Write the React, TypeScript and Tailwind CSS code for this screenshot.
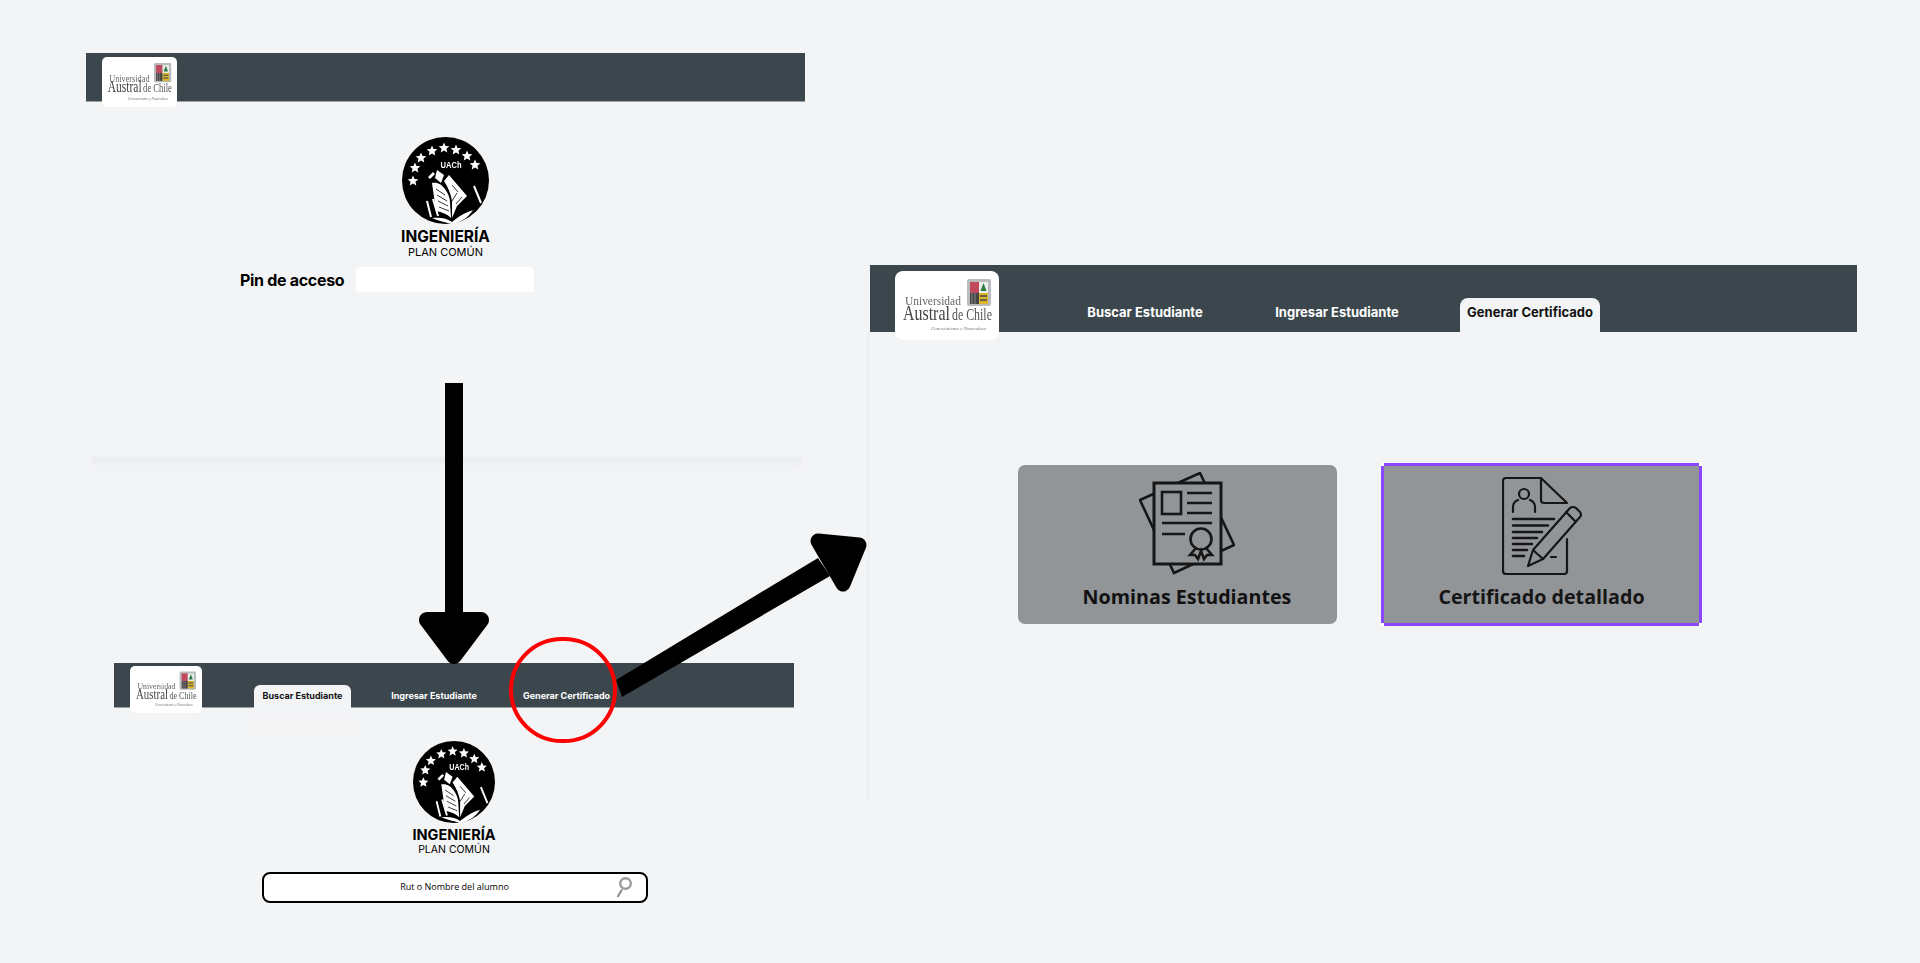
import React from "react";

const Star = ({ x, y, r = 5.6 }: { x: number; y: number; r?: number }) => {
  const pts: string[] = [];
  for (let i = 0; i < 10; i++) {
    const rad = i % 2 === 0 ? r : r * 0.46;
    const a = (Math.PI / 5) * i - Math.PI / 2;
    pts.push(`${x + rad * Math.cos(a)},${y + rad * Math.sin(a)}`);
  }
  return <polygon points={pts.join(" ")} fill="#fff" />;
};

const stars = [
  [11, 44],
  [13, 31],
  [19, 21],
  [30, 14],
  [42, 11],
  [54, 13],
  [65, 19],
  [73, 28],
];

// round black faculty badge
const UachBadge = ({ className }: { className: string }) => (
  <svg viewBox="0 0 87 87" className={className}>
    <circle cx="43.5" cy="43.5" r="43.5" fill="#000" />
    {stars.map(([x, y]) => (
      <Star key={`${x}-${y}`} x={x} y={y} />
    ))}
    <text x="49" y="31" fontSize="9" fontWeight="700" fill="#fff" textAnchor="middle" textLength="21" lengthAdjust="spacingAndGlyphs" fontFamily="'Liberation Sans', sans-serif">
      UACh
    </text>
    <path d="M26 40l5-5 2 2-5 5zM35 33l7 5-3 8-6-5z" fill="#fff" />
    <path d="M30 46c6-1 10 2 13 6 3 4 5 9 5 13l1 16c-4-4-9-6-15-7z" fill="#fff" />
    <path d="M42 44l5-6 18 21-10 10-5 12v-17c-1-7-4-14-8-20z" fill="#fff" />
    <path d="M34 52l9 6M35 58l10 6M36 64l10 5M37 70l10 4M50 48l6 7M55 56l-5 8M60 60l-6 7" stroke="#000" strokeWidth="0.8" fill="none" />
    <path d="M25 64l4 16M31 62l5 17M72 49l7 17" stroke="#fff" strokeWidth="2" fill="none" />
    <path d="M30 81c8-1 15 0 20 4 6-5 12-9 21-12-5 8-12 12-21 14-7-2-13-3-20-6z" fill="#fff" />
  </svg>
);

// university logo on its white tile
const UniLogo = ({ className }: { className: string }) => (
  <div className={`bg-white shrink-0 ${className}`}>
    <svg viewBox="0 0 104 69" className="w-full h-full blur-[0.5px]">
      <rect x="72" y="8" width="24" height="27" rx="2" fill="#b9bbbd" />
      <rect x="75" y="11" width="9" height="11" fill="#c04a5c" />
      <rect x="84" y="11" width="9" height="11" fill="#e8eee8" />
      <path d="M88.500 12l3 8h-6z" fill="#2d7a45" />
      <rect x="75" y="22" width="9" height="11" fill="#444" />
      <rect x="84" y="22" width="9" height="11" fill="#d9b530" />
      <path d="M85 25h7M85 29h7" stroke="#444" strokeWidth="1.400" />
      <path d="M77 22v11M80 22v11" stroke="#999" strokeWidth="0.8" />
      <g fontFamily="'Liberation Serif', serif">
        <text transform="translate(10 34) scale(0.88 1)" fontSize="13" fill="#666">
          Universidad
        </text>
        <text transform="translate(8 49) scale(0.725 1)" fontSize="22" fill="#444">
          Austral
        </text>
        <text transform="translate(57 49) scale(0.743 1)" fontSize="16" fill="#555">
          de Chile
        </text>
        <text x="36" y="59" fontSize="5" fontStyle="italic" fill="#777">
          Conocimiento y Naturaleza
        </text>
      </g>
    </svg>
  </div>
);

const DiplomaIcon = () => (
  <svg viewBox="0 0 96 103" className="w-[96px] h-[103px] blur-[0.4px]" fill="none" stroke="#161616" strokeWidth="2.600">
    <polygon points="1,28 61,1 95,73 35,101" />
    <rect x="15" y="11" width="67" height="81" fill="#929598" strokeWidth="3" />
    <rect x="23" y="20" width="19" height="22" />
    <path d="M48 21h25M48 31h25M48 41h25M23 51h50M23 62h23" />
    <circle cx="62" cy="67" r="10.500" />
    <path d="M57 76l-6 7h5l3 4 3-8 3 8 3-4h5l-6-7" />
  </svg>
);

const CertificateIcon = () => (
  <svg viewBox="0 0 80 98" className="w-[80px] h-[98px] blur-[0.4px]" fill="none" stroke="#161616" strokeWidth="2.200" strokeLinecap="round" strokeLinejoin="round">
    <path d="M65 62v32q0 3-3 3H4q-3 0-3-3V4q0-3 3-3h35l26 25H42q-3 0-3-3V1" />
    <circle cx="22" cy="17" r="5" />
    <path d="M11 35v-5q0-5 5-7M33 35v-5q0-5-5-7" />
    <path d="M11 42h41M11 48.500h35M11 55h29M11 61h24M11 67h19M11 73h14M11 79h11" strokeWidth="2.600" />
    <path d="M26 89l5-16 37-42q3-2 6 0l4 4q2 3 0 5L41 82z" />
    <path d="M31 73l10 9M64 35l9 9M49 80h5" />
  </svg>
);

const SmallTab = ({ label, active, width }: { label: string; active?: boolean; width: string }) => (
  <div className={`h-[23px] pb-[1px] flex items-center justify-center rounded-t-[6px] text-[9px] font-bold whitespace-nowrap ${width} ${active ? "bg-[#f3f4f6] text-[#111]" : "text-white"}`}>
    {label}
  </div>
);

const BigTab = ({ label, active, width }: { label: string; active?: boolean; width: string }) => (
  <div className={`h-[34px] pb-[4px] flex items-center justify-center rounded-t-[8px] text-[13px] font-bold whitespace-nowrap ${width} ${active ? "bg-[#f3f4f6] text-[#111]" : "text-white"}`}>
    {label}
  </div>
);

export default function App() {
  return (
    <div className="relative w-full h-[963px] overflow-hidden bg-[#f3f4f6] font-['Inter','Liberation_Sans',sans-serif]">
      {/* faint shadow of the frame between the two steps */}
      <div className="absolute left-[92px] top-[457px] w-[710px] h-[10px] bg-gradient-to-b from-[#e6e8ea] to-[#f3f4f6] blur-[1.5px]" />
      <div className="absolute left-[254px] top-[720px] w-[98px] h-[13px] bg-[#f5f5f6] blur-[2px]" />

      {/* pin frame */}
      <div className="absolute left-[86px] top-[53px] w-[719px]">
        <div className="h-[49px] bg-[#3c474d] border-b border-[#9aa1a5] pl-[16px] pt-[4px]">
          <UniLogo className="w-[75px] h-[50px] rounded-[5px]" />
        </div>
        <div className="flex flex-col items-center mt-[35px]">
          <UachBadge className="w-[87px] h-[87px] blur-[0.3px]" />
          <div className="mt-[5px] flex flex-col items-center text-black">
            <div className="font-bold leading-[16px] text-[15.500px]">INGENIERÍA</div>
            <div className="text-[11px] leading-[14px]">PLAN COMÚN</div>
          </div>
        </div>
        <div className="flex items-center gap-[12px] ml-[154px] mt-[8px]">
          <span className="w-[104px] text-[16px] font-bold tracking-[-0.3px] text-black whitespace-nowrap">Pin de acceso</span>
          <div className="w-[178px] h-[25px] bg-white rounded-[4px]" />
        </div>
      </div>

      {/* search frame */}
      <div className="absolute left-[114px] top-[663px] w-[680px]">
        <div className="h-[45px] bg-[#3c474d] border-b border-[#9aa1a5] pl-[16px] pt-[3px] flex items-start">
          <UniLogo className="w-[72px] h-[47px] rounded-[5px]" />
          <div className="flex items-start mt-[19px] ml-[52px] gap-[41px]">
            <SmallTab label="Buscar Estudiante" active width="w-[97px]" />
            <SmallTab label="Ingresar Estudiante" width="w-[84px]" />
            <div className="ml-[7px]">
              <SmallTab label="Generar Certificado" width="w-[85px]" />
            </div>
          </div>
        </div>
        <div className="flex flex-col items-center mt-[33px]">
          <UachBadge className="w-[82px] h-[82px] blur-[0.3px]" />
          <div className="mt-[4px] flex flex-col items-center text-black">
            <div className="font-bold leading-[16px] text-[14.500px]">INGENIERÍA</div>
            <div className="text-[10.500px] leading-[14px]">PLAN COMÚN</div>
          </div>
          <div className="relative mt-[15px] ml-[1px] w-[386px] h-[31px] bg-white border-2 border-black rounded-[8px] pb-[1px] flex items-center justify-center text-[9px] text-black font-['Open_Sans','Liberation_Sans',sans-serif]">
            Rut o Nombre del alumno
            <svg viewBox="0 0 18 22" className="absolute right-[13px] top-[3px] w-[18px] h-[22px]" fill="none">
              <circle cx="10.500" cy="6.500" r="5.300" stroke="#9a9a9a" strokeWidth="2.400" />
              <path d="M7 12.500L2.500 20" stroke="#8a8a8a" strokeWidth="2" />
            </svg>
          </div>
        </div>
      </div>

      {/* certificate frame */}
      <div className="absolute left-[870px] top-[265px] w-[987px]">
        <div className="h-[67px] bg-[#3c474d] pl-[25px] pt-[6px] flex items-start">
          <UniLogo className="w-[104px] h-[69px] rounded-[8px]" />
          <div className="flex items-start mt-[27px] ml-[90px]">
            <BigTab label="Buscar Estudiante" width="w-[112px]" />
            <div className="ml-[75px]">
              <BigTab label="Ingresar Estudiante" width="w-[122px]" />
            </div>
            <div className="ml-[62px]">
              <BigTab label="Generar Certificado" active width="w-[140px]" />
            </div>
          </div>
        </div>
        <div className="flex items-center gap-[44px] pl-[148px] mt-[131px] font-['Open_Sans','Liberation_Sans',sans-serif]">
          <div className="w-[319px] h-[159px] bg-[#929598] rounded-[7px] flex flex-col items-center pt-[7px] pl-[19px]">
            <DiplomaIcon />
            <span className="mt-[8px] text-[19.700px] leading-[27px] font-bold text-[#111]">Nominas Estudiantes</span>
          </div>
          <div className="relative w-[321px] h-[163px] bg-[#929598] border-[3px] border-[#8b46ff] flex flex-col items-center pt-[11px]">
            <CertificateIcon />
            <span className="mt-[8px] text-[19.700px] leading-[27px] font-bold text-[#161616]">Certificado detallado</span>
          </div>
        </div>
      </div>
      <div className="absolute left-[867px] top-[332px] w-[3px] h-[470px] bg-[#eeeff1]" />

      {/* arrows and the red mark lie over the frames */}
      <svg viewBox="0 0 70 281" className="absolute left-[419px] top-[383px] w-[70px] h-[281px]">
        <rect x="26" y="0" width="18" height="232" fill="#000" />
        <path d="M8 237h54L35 273z" fill="#000" stroke="#000" strokeWidth="16" strokeLinejoin="round" />
      </svg>
      <svg viewBox="0 0 260 170" className="absolute left-[612px] top-[530px] w-[260px] h-[170px]">
        <polygon points="4,150 10,167 218,46 206,28" fill="#000" />
        <polygon points="206,11 247,15 231,54" fill="#000" stroke="#000" strokeWidth="15" strokeLinejoin="round" />
      </svg>
      <div className="absolute left-[509px] top-[637px] w-[108px] h-[106px] rounded-full border-[4px] border-[#f00]" />

      {/* selection handles of the picked card */}
      <div className="absolute left-[1381px] top-[463px] w-[3px] h-[3px] bg-white" />
      <div className="absolute left-[1699px] top-[463px] w-[3px] h-[3px] bg-white" />
      <div className="absolute left-[1381px] top-[623px] w-[3px] h-[3px] bg-white" />
      <div className="absolute left-[1699px] top-[623px] w-[3px] h-[3px] bg-white" />
    </div>
  );
}
